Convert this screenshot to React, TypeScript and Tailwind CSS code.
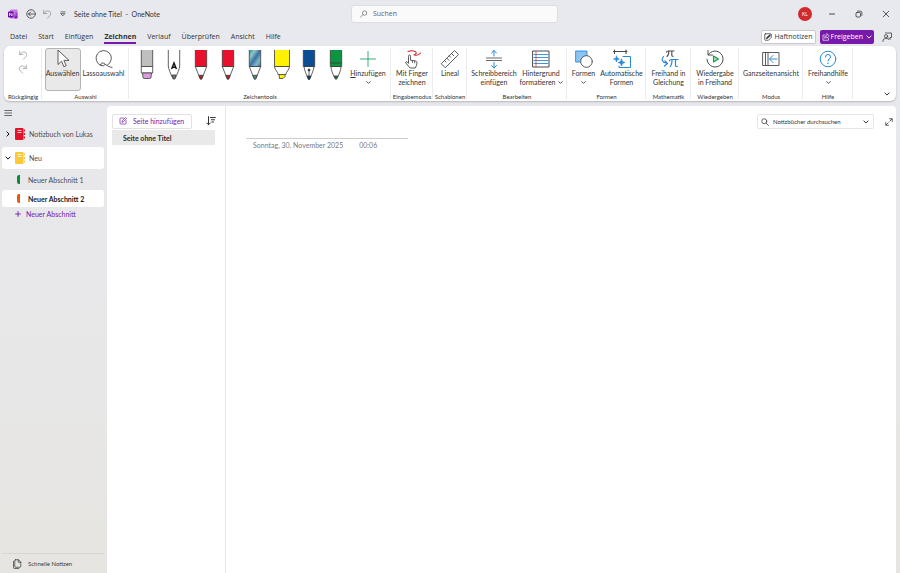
import type { ReactNode } from "react";

type IconProps = { className?: string; box?: string; children: ReactNode };

function Icon({ className = "size-5", box = "0 0 20 20", children }: IconProps) {
  return (
    <svg
      viewBox={box}
      className={className}
      fill="none"
      stroke="currentColor"
      strokeLinecap="round"
      strokeLinejoin="round"
      aria-hidden="true"
    >
      {children}
    </svg>
  );
}

function Chevron({ className = "size-1.5" }: { className?: string }) {
  return (
    <Icon className={className} box="0 0 8 8">
      <path d="M1.2 2.6 4 5.4l2.8-2.8" strokeWidth="1.3" />
    </Icon>
  );
}

function Undo({ className }: { className: string }) {
  return (
    <Icon className={className} box="0 0 12 12">
      <path d="M2 1.500v4h4M2.200 5.300C4 2.600 6.400 1.700 8.400 2.600c2.300 1.100 2.700 3.700 1 5.400L6.500 11" strokeWidth="0.9" />
    </Icon>
  );
}

function Group({ label, width, children }: { label: string; width: string; children: ReactNode }) {
  return (
    <section className={`relative flex shrink-0 flex-col items-center ${width}`}>
      <div className="flex h-11 w-full justify-center pt-0.5">{children}</div>
      <h2 className="mt-0.5 whitespace-nowrap text-[6px] leading-[9px]">{label}</h2>
      <span className="absolute inset-y-0.5 right-0 w-px bg-[#ececee]" />
    </section>
  );
}

type ToolProps = {
  lines: ReactNode[];
  width: string;
  icon: ReactNode;
  active?: boolean;
  menu?: boolean;
};

function Tool({ lines, width, icon, active = false, menu = false }: ToolProps) {
  return (
    <button
      type="button"
      className={`flex h-[43px] shrink-0 flex-col items-center rounded-[3px] border ${width} ${
        active ? "border-[#b4b4b4] bg-[#e9e9e9]" : "border-transparent"
      }`}
    >
      <span className="flex h-5 items-center text-[#4a4a4a]">{icon}</span>
      {lines.map((line, i) => (
        <span key={i} className="whitespace-nowrap text-[7px] leading-[9px]">
          {line}
        </span>
      ))}
      {menu && <Chevron className="mt-0.5 size-[5px]" />}
    </button>
  );
}

function Pen({ name, children }: { name: string; children: ReactNode }) {
  return (
    <button type="button" aria-label={name} className="flex w-[27px] shrink-0 justify-center pt-0.5">
      <svg viewBox="0 0 18 30" className="h-[30px] w-[18px]" fill="none" stroke="#3b3b3b" strokeWidth="0.8" aria-hidden="true">
        {children}
      </svg>
    </button>
  );
}

function RedPencil() {
  return (
    <Pen name="Stift: Rot">
      <path d="M3.300 16.500 8 28.500h2l4.700-12z" fill="#fff" />
      <path d="m6.900 25.300 1.300 3.400.8 1 .8-1 1.300-3.400z" fill="#c4161c" />
      <path d="M3.300 0v16.500h11.400V0" fill="#e8112d" />
    </Pen>
  );
}

function Pens() {
  return (
    <>
      <Pen name="Radierer">
        <path d="M3.300 0v16.500h11.400V0" fill="#bfbfbf" />
        <path d="M3.300 16.500h11.400v6.500H3.300z" fill="#fff" />
        <path d="M4.500 23h9l-.5 4.500q-.2 1-1.200 1H6.200q-1 0-1.200-1z" fill="#d99fdc" />
      </Pen>
      <Pen name="Freihand in Text">
        <path d="M3.300 0v16q.2 2.500 1.500 5.500l3 7h2.400l3-7q1.300-3 1.500-5.500V0" fill="#fff" />
        <path d="m7 25 1.200 3.500.8 1 .8-1L11 25z" fill="#777" />
        <path d="M6.600 19 9 13l2.400 6M7.500 17.200h3" stroke="#111" strokeWidth="1.400" />
      </Pen>
      <RedPencil />
      <RedPencil />
      <Pen name="Stift: Galaxie">
        <defs>
          <linearGradient id="galaxy" x1="0" y1="0" x2="1" y2="1">
            <stop offset="0" stopColor="#2c8c9c" />
            <stop offset=".25" stopColor="#8dc8c0" />
            <stop offset=".5" stopColor="#3d6fa5" />
            <stop offset=".75" stopColor="#79c0c4" />
            <stop offset="1" stopColor="#5a5b9e" />
          </linearGradient>
        </defs>
        <path d="M3.300 16.500 8 28.500h2l4.700-12z" fill="#fff" />
        <path d="m6.900 25.300 1.300 3.400.8 1 .8-1 1.300-3.400z" fill="#4c8c8c" />
        <path d="M3.300 0v16.500h11.400V0" fill="url(#galaxy)" />
      </Pen>
      <Pen name="Textmarker: Gelb">
        <path d="M6.300 24v4.500h3.700l2-2V24z" fill="#fff200" />
        <path d="M1.500 16.500q.2 2.500 2 4.500 1.300 1.500 1.500 3.500h8q.2-2 1.500-3.500 1.800-2 2-4.500z" fill="#fff" />
        <path d="M1.500 0v16.500h15V0" fill="#fff200" />
      </Pen>
      <Pen name="Füllfederhalter: Blau">
        <path d="M4 16.500q.2 3 2 7l2.200 5.500h1.600l2.200-5.500q1.800-4 2-7z" fill="#fff" />
        <path d="m7 26 1.300 3 .7 1 .7-1L11 26z" fill="#0b3f7d" />
        <path d="M9 20v6" />
        <circle cx="9" cy="20" r="1" fill="#222" />
        <path d="M3.300 0v16.500h11.400V0" fill="#0a4f93" />
      </Pen>
      <Pen name="Stift: Grün">
        <path d="M4 16.500q0 3 1.500 6.500L8 28.500h2l2.500-5.500Q14 19.500 14 16.500z" fill="#fff" />
        <path d="m7 26 1.300 2.500.7 1 .7-1L11 26z" fill="#0b7d33" />
        <path d="M3.300 0v16.500h11.400V0" fill="#0d9440" />
        <path d="M3.300 13h11.400" />
      </Pen>
    </>
  );
}

const tabs = ["Datei", "Start", "Einfügen", "Zeichnen", "Verlauf", "Überprüfen", "Ansicht", "Hilfe"];

function TitleBar() {
  return (
    <header className="flex h-7 items-center">
      <div className="flex min-w-0 flex-1 items-center pl-2">
        <svg viewBox="0 0 20 20" className="size-2.5 shrink-0" role="img" aria-label="OneNote">
          <rect x="4" y="1" width="15" height="18" rx="2" fill="#c778e8" />
          <path d="M15 7h4v6h-4z" fill="#a03fd0" />
          <path d="M13 13h6v4q0 2-2 2h-4z" fill="#7f24b5" />
          <rect x="0" y="5" width="11" height="12" rx="1.500" fill="#6a0fa5" />
          <path d="M3 14V8l5 6V8" stroke="#fff" strokeWidth="1.500" fill="none" />
        </svg>
        <button type="button" aria-label="Zurück" className="ml-2">
          <Icon className="size-2.5">
            <circle cx="10" cy="10" r="8.500" strokeWidth="1.600" />
            <path d="M15 10H5m4-4-4 4 4 4" strokeWidth="1.600" />
          </Icon>
        </button>
        <button type="button" aria-label="Rückgängig" className="ml-1.5 text-[#8b8c90]">
          <Undo className="size-2.5" />
        </button>
        <button type="button" aria-label="Symbolleiste anpassen" className="ml-2">
          <Icon className="size-1.5" box="0 0 8 8">
            <path d="M1.200 1.200h5.600M1.500 3.500h5L4 6.200z" strokeWidth=".9" />
          </Icon>
        </button>
        <h1 className="ml-2 truncate text-[7px] leading-[10px]">Seite ohne Titel&nbsp; -&nbsp; OneNote</h1>
      </div>
      <label className="ml-2.5 flex h-[18px] w-[23%] items-center rounded-[3px] border border-[#dcdde0] bg-[#fafafb] pl-2 text-[#5f6064]">
        <Icon className="size-2" box="0 0 16 16">
          <circle cx="10" cy="6" r="4.800" strokeWidth="1.400" />
          <path d="m6.500 9.500-5.500 5" strokeWidth="1.400" />
        </Icon>
        <input
          type="search"
          aria-label="Suchen"
          placeholder="Suchen"
          className="ml-1.5 w-full min-w-0 bg-transparent font-['Open_Sans','Noto_Sans',sans-serif] text-[7px] leading-[10px] outline-none placeholder:text-[#5f6064]"
        />
      </label>
      <div className="flex flex-1 items-center justify-end pr-2.5">
        <button type="button" aria-label="Konto" className="size-3.5 rounded-full bg-[#d02a2e] text-[5px] leading-[14px] text-white">
          KL
        </button>
        <button type="button" aria-label="Minimieren" className="ml-4">
          <Icon className="size-2" box="0 0 8 8"><path d="M1.500 4h5" strokeWidth=".9" /></Icon>
        </button>
        <button type="button" aria-label="Verkleinern" className="ml-[19px]">
          <Icon className="size-2" box="0 0 8 8">
            <rect x="1" y="2.500" width="4.500" height="4.500" rx="1" strokeWidth=".8" />
            <path d="M2.600 1.100h2.500q1.800 0 1.800 1.800v2.500" strokeWidth=".8" />
          </Icon>
        </button>
        <button type="button" aria-label="Schließen" className="ml-[19px]">
          <Icon className="size-2" box="0 0 8 8"><path d="m1.200 1.200 5.600 5.600m0-5.600L1.200 6.800" strokeWidth=".8" /></Icon>
        </button>
      </div>
    </header>
  );
}

function TabRow() {
  return (
    <div className="flex h-[18px] items-center pr-2 pl-2.5 font-['Open_Sans','Noto_Sans',sans-serif]">
      <nav className="flex flex-1 gap-[11px] pt-px text-[7px] leading-[11px]">
        {tabs.map((tab) => (
          <button
            key={tab}
            type="button"
            className={tab === "Zeichnen" ? "border-b-2 border-[#7719aa] font-bold" : "border-b-2 border-transparent"}
          >
            {tab}
          </button>
        ))}
      </nav>
      <button type="button" className="flex h-3.5 items-center gap-0.5 rounded-[2px] border border-[#c9cacd] bg-white px-0.5 text-[7px]">
        <Icon className="size-2" box="0 0 16 16">
          <path d="M3 1.500h10q1.500 0 1.500 1.500v6L9 14.500H3q-1.500 0-1.500-1.500V3Q1.500 1.500 3 1.500z" strokeWidth="1.500" />
          <path d="m12 3-6 5-2 4 4-1.500 5-5z" fill="currentColor" strokeWidth=".8" />
        </Icon>
        Haftnotizen
      </button>
      <button type="button" className="ml-1 flex h-3.5 items-center gap-px rounded-[2px] bg-[#7719aa] px-0.5 text-[7px] text-white">
        <Icon className="size-2" box="0 0 16 16">
          <path d="M6 4H2v10.500h11V11M10 1.500 14.500 6 10 10.500V8Q6.500 8 5 10.500 5.500 5 10 4z" strokeWidth="1.300" />
        </Icon>
        Freigeben
        <Chevron className="ml-0.5 size-1.5" />
      </button>
      <button type="button" aria-label="Feedback" className="ml-2">
        <Icon className="size-2.5">
          <path d="M7 2h12v9h-3v4l-3.500-3.500" strokeWidth="1.500" />
          <circle cx="8" cy="8.500" r="3.200" strokeWidth="1.500" />
          <path d="M1.500 19q0-6.500 6.500-6.500 4 0 5 2.500" strokeWidth="1.500" />
        </Icon>
      </button>
    </div>
  );
}

function Ribbon() {
  return (
    <div className="mx-1 flex h-[55px] shrink-0 rounded-md bg-white shadow-[0_1px_2px_rgba(0,0,0,0.22)]">
      <Group label="Rückgängig" width="w-[38px]">
        <div className="flex flex-col items-center gap-1 pt-0.5 text-[#99999c]">
          <button type="button" aria-label="Rückgängig machen"><Undo className="size-2.5" /></button>
          <button type="button" aria-label="Wiederholen"><Undo className="size-2.5 -scale-x-100" /></button>
        </div>
      </Group>
      <Group label="Auswahl" width="w-[87px]">
        <Tool
          active
          width="w-9"
          lines={["Auswählen"]}
          icon={
            <Icon className="size-5">
              <path d="M5 1.500v14l3.600-3.300 2.200 5.500 2.400-1-2.300-5.300h4.700z" fill="#fff" strokeWidth=".9" />
            </Icon>
          }
        />
        <Tool
          width="w-[46px]"
          lines={["Lassoauswahl"]}
          icon={
            <Icon className="size-5">
              <path d="M7 16.500a7.700 7.700 0 1 1 6.500-.5M7 16.500q-1-2 .8-2.500 2.200-.3 3.700 1.500 3 2.500 6.500 3M7 16.500q2 1.500 4.500-1" strokeWidth=".9" />
            </Icon>
          }
        />
      </Group>
      <Group label="Zeichentools" width="w-[262px]">
        <div className="flex">
          <Pens />
        </div>
        <Tool
          menu
          width="w-[38px]"
          lines={[<><u className="underline-offset-1">H</u>inzufügen</>]}
          icon={<Icon className="size-5 text-[#21a366]"><path d="M10 2.500v15M2.500 10h15" strokeWidth=".9" /></Icon>}
        />
      </Group>
      <Group label="Eingabemodus" width="w-[42px]">
        <Tool
          width="w-10"
          lines={["Mit Finger", "zeichnen"]}
          icon={
            <Icon className="size-5">
              <path d="M6 2.500q4-1.500 7 0t-1 3.300q4 1.500 6.500-1.800" stroke="#d8262c" strokeWidth="1.100" />
              <path d="M6.500 14V7.200q0-1.200 1-1.200t1 1.200v4l5 .8q1.600.3 1.500 1.700l-.5 2.800-1.200 2.500H8L3.800 14q-.6-1 .4-1.400z" strokeWidth=".9" />
              <path d="M10.500 11.500v2M12.700 12v2" strokeWidth=".8" />
            </Icon>
          }
        />
      </Group>
      <Group label="Schablonen" width="w-[34px]">
        <Tool
          width="w-8"
          lines={["Lineal"]}
          icon={
            <Icon className="size-5">
              <path d="M1.500 14.500 14.500 1.500l4 4-13 13zM4.500 11.500l1.500 1.500M6.800 9.200l2.200 2.200M9.200 6.800l1.500 1.500M11.500 4.500l2.200 2.200" strokeWidth=".9" />
            </Icon>
          }
        />
      </Group>
      <Group label="Bearbeiten" width="w-[100px]">
        <Tool
          width="w-12"
          lines={["Schreibbereich", "einfügen"]}
          icon={
            <Icon className="size-5">
              <path d="M2.500 9h15M2.500 11.500h15" strokeWidth=".9" stroke="#555" />
              <path d="M10 7V1.500M7.500 4 10 1.500 12.500 4M10 13.500V19m-2.500-2.500L10 19l2.500-2.500" stroke="#2b88d8" strokeWidth="1" />
            </Icon>
          }
        />
        <Tool
          width="w-[46px]"
          lines={[
            "Hintergrund",
            <span className="flex items-center gap-0.5">formatieren <Chevron className="size-[5px]" /></span>,
          ]}
          icon={
            <Icon className="size-5">
              <path d="M2 2h16v16H2z" strokeWidth="1" />
              <path d="M3 5.500h14M3 8.500h14M3 11.500h14M3 14.500h14" stroke="#2b88d8" strokeWidth=".9" />
              <path d="M5 2.500v15" stroke="#d8262c" strokeWidth=".7" />
            </Icon>
          }
        />
      </Group>
      <Group label="Formen" width="w-[79px]">
        <Tool
          menu
          width="w-[30px]"
          lines={["Formen"]}
          icon={
            <Icon className="size-5">
              <path d="M2 2h11v11H2z" fill="#8cc5f3" stroke="#2b88d8" strokeWidth=".9" />
              <circle cx="12.500" cy="12.500" r="5.800" fill="#fff" strokeWidth=".9" />
            </Icon>
          }
        />
        <Tool
          width="w-[46px]"
          lines={["Automatische", "Formen"]}
          icon={
            <Icon className="size-5">
              <path d="M2.500 1v3.500M14 1v3.500M1.500 2.500h13.500" strokeWidth="1.100" />
              <path d="M11 7.500h7.500V18.500H7V17" stroke="#2b88d8" strokeWidth="1" />
              <path d="m4.500 7 .8 2.200 2.200.8-2.200.8-.8 2.200-.8-2.200L1.500 10l2.200-.8zM9.500 10l1 2.500 2.500 1-2.500 1-1 2.500-1-2.500-2.500-1 2.500-1z" fill="#2b88d8" stroke="#2b88d8" strokeWidth=".6" />
            </Icon>
          }
        />
      </Group>
      <Group label="Mathematik" width="w-[45px]">
        <Tool
          width="w-[43px]"
          lines={["Freihand in", "Gleichung"]}
          icon={
            <Icon className="size-5">
              <path d="M7.500 3.200q.4-1.200 1.700-1.200H15M9.800 2.200q0 4-1.800 5.300M12.800 2.200v4q0 1.300 1.400 1" strokeWidth="1.100" />
              <path d="M4.500 7.500q-4 5 3.500 7M6 11.800l2.500 2.700L5.500 17M10.500 11.800q.4-1.300 1.800-1.300H19M13 10.700q0 5-1.800 7M16.500 10.700v5.500q0 1.600 1.800 1.200" stroke="#2b88d8" strokeWidth="1.200" />
            </Icon>
          }
        />
      </Group>
      <Group label="Wiedergeben" width="w-12">
        <Tool
          width="w-11"
          lines={["Wiedergabe", "in Freihand"]}
          icon={
            <Icon className="size-5">
              <path d="M3 1.500V6h4.500M3.200 5.800a8 8 0 1 1-1.200 4.500" strokeWidth="1" />
              <path d="M8.500 7v6l5-3z" fill="#a7dfb9" stroke="#1c9a4b" strokeWidth="1.100" />
            </Icon>
          }
        />
      </Group>
      <Group label="Modus" width="w-16">
        <Tool
          width="w-[62px]"
          lines={["Ganzseitenansicht"]}
          icon={
            <Icon className="size-5">
              <path d="M2 3.500h16v13H2zM4.500 3.500v13M7 3.500v13" strokeWidth=".9" />
              <path d="M16 10H9m3-3.500L8.500 10l3.500 3.500" stroke="#2b88d8" strokeWidth="1" />
            </Icon>
          }
        />
      </Group>
      <Group label="Hilfe" width="w-[50px]">
        <Tool
          menu
          width="w-12"
          lines={["Freihandhilfe"]}
          icon={
            <Icon className="size-5 text-[#2b88d8]">
              <circle cx="10" cy="10" r="7.800" strokeWidth="1" />
              <path d="M7.500 8q0-2.600 2.500-2.600T12.500 8q0 1.200-1.300 2Q10 10.800 10 12" strokeWidth="1" />
              <path d="M10 14.200v.2" strokeWidth="1.300" />
            </Icon>
          }
        />
      </Group>
      <div className="flex flex-1 items-end justify-end pr-1.5 pb-1">
        <button type="button" aria-label="Menüband minimieren"><Chevron className="size-1.5" /></button>
      </div>
    </div>
  );
}

function Notebook({ color }: { color: string }) {
  return (
    <svg viewBox="0 0 20 24" className="h-3 w-2.5 shrink-0" fill={color} aria-hidden="true">
      <rect x="0" y="0" width="17" height="24" rx="2" />
      <path d="M17.500 3H20v4h-2.500zM17.500 10H20v4h-2.500zM17.500 17H20v4h-2.500z" />
      <path d="M5 5h8M5 9h8" stroke="#fff" strokeWidth="1.600" />
    </svg>
  );
}

function Sidebar() {
  return (
    <aside className="flex w-[107px] shrink-0 flex-col pl-0.5 text-[#4c4d51]">
      <button type="button" aria-label="Navigation" className="flex h-3.5 items-center pl-0.5 text-[#44454a]">
        <Icon className="size-2" box="0 0 8 8"><path d="M.8 1.500h6.800M.8 4h6.800M.8 6.500h6.800" strokeWidth=".8" /></Icon>
      </button>
      <div className="mt-[3px] mr-[3px] flex flex-col gap-0.5 text-[7px] leading-[10px]">
        <button type="button" className="flex h-[22px] items-center pl-[3px] whitespace-nowrap">
          <Chevron className="size-1.5 -rotate-90 text-black" />
          <span className="ml-1 flex"><Notebook color="#e0132b" /></span>
          <span className="ml-1">Notizbuch von Lukas</span>
        </button>
        <button type="button" className="flex h-[22px] items-center rounded-[3px] bg-white pl-[3px]">
          <Chevron className="size-1.5 text-black" />
          <span className="ml-1 flex"><Notebook color="#fcc83a" /></span>
          <span className="ml-1">Neu</span>
        </button>
        <button type="button" className="flex h-[17px] items-center pl-[15px]">
          <span className="h-[9px] w-[3px] rounded-l-[2px] bg-[#10893e]" />
          <span className="ml-2">Neuer Abschnitt 1</span>
        </button>
        <button type="button" className="flex h-[17px] items-center rounded-[3px] bg-white pl-[15px] font-bold text-[#1b1b1b]">
          <span className="h-[9px] w-[3px] rounded-l-[2px] bg-[#e8590c]" />
          <span className="ml-2">Neuer Abschnitt 2</span>
        </button>
      </div>
      <button type="button" className="flex h-[13px] items-center pl-[13px] text-[7px] leading-[10px] text-[#7719aa]">
        <Icon className="size-1.5" box="0 0 8 8"><path d="M4 .8v6.400M.8 4h6.400" strokeWidth="1.200" /></Icon>
        <span className="ml-[5px]">Neuer Abschnitt</span>
      </button>
      <button type="button" className="mt-auto mr-[3px] flex h-5 items-center border-t border-[#d6d6d4] pl-2.5 text-[6px] text-[#3d3d3d]">
        <Icon className="size-2.5">
          <path d="M7 1.500h6l4.500 4.500v9q0 1.500-1.500 1.500H7q-1.500 0-1.500-1.500V3Q5.500 1.500 7 1.500zM12.500 1.500v5h5M3 4.500V17q0 2 2 2h8.500" strokeWidth="1.500" />
        </Icon>
        <span className="ml-1.5">Schnelle Notizen</span>
      </button>
    </aside>
  );
}

function PageList() {
  return (
    <div className="w-[119px] shrink-0 border-r border-[#e6e6e6] pt-1.5 pr-2.5 pl-[5px]">
      <div className="flex items-center justify-between">
        <button type="button" className="flex h-[15px] w-20 items-center rounded-[2px] border border-[#e2e2e4] pl-1.5 text-[7px] whitespace-nowrap text-[#7719aa]">
          <Icon className="size-2" box="0 0 16 16">
            <path d="M9 2H3.500Q2 2 2 3.500v9Q2 14 3.500 14h9q1.500 0 1.500-1.500V7M6 10l.7-2.700L13 1l2 2-6.300 6.300z" strokeWidth="1.400" />
          </Icon>
          <span className="ml-1.5">Seite hinzufügen</span>
        </button>
        <button type="button" aria-label="Seiten sortieren" className="-mr-[5px]">
          <Icon className="size-[18px] p-1" box="0 0 16 16">
            <path d="M4 1v13M1 11l3 3 3-3M7 2.500h8M8.500 6h5M9.500 9.500h2.500" strokeWidth="1.600" />
          </Icon>
        </button>
      </div>
      <button type="button" className="flex h-[15px] w-full items-center bg-[#e9e9e9] pl-[11px] text-[7px] leading-[10px] font-bold text-[#2b2b2b]">
        Seite ohne Titel
      </button>
    </div>
  );
}

function Canvas() {
  return (
    <main className="flex min-w-0 flex-1 items-start justify-between">
      <div className="ml-5 w-[162px] pt-4">
        <input
          type="text"
          aria-label="Seitentitel"
          className="block h-[17px] w-full border-b border-[#cdcdcd] bg-transparent px-[7px] text-[10px] outline-none"
        />
        <p className="flex gap-4 pt-px pl-[7px] text-[7px] leading-[10px] text-[#7a7a7a]">
          <time>Sonntag, 30. November 2025</time>
          <time>00:06</time>
        </p>
      </div>
      <div className="flex items-center pt-2 pr-[3px]">
        <label className="flex h-[15px] w-[117px] items-center rounded-[2px] border border-[#e6e6e8] pr-1 pl-[3px]">
          <Icon className="size-2 shrink-0" box="0 0 16 16">
            <circle cx="6.500" cy="6.500" r="5" strokeWidth="1.500" />
            <path d="m10.500 10.500 4.500 4.500" strokeWidth="1.500" />
          </Icon>
          <input
            type="search"
            aria-label="Notizbücher durchsuchen"
            placeholder="Notizbücher durchsuchen"
            className="ml-1 w-full min-w-0 bg-transparent text-[6px] leading-[9px] outline-none placeholder:text-[#333]"
          />
          <Chevron className="size-1.5 shrink-0" />
        </label>
        <button type="button" aria-label="Vollbild" className="ml-[11px]">
          <Icon className="size-2" box="0 0 16 16">
            <path d="M9 1.500h5.500V7M14 2 9.500 6.500M7 14.500H1.500V9M2 14l4.500-4.500" strokeWidth="1.500" />
          </Icon>
        </button>
      </div>
    </main>
  );
}

export default function App() {
  return (
    <div className="flex h-screen flex-col overflow-hidden bg-linear-to-b from-[#e8e9ee] via-[#e8e8ea] to-[#e6e5e1] font-['Lato','Open_Sans',sans-serif] text-[#333]">
      <TitleBar />
      <TabRow />
      <Ribbon />
      <div className="mt-[5px] flex min-h-0 flex-1">
        <Sidebar />
        <div className="mr-1 flex min-w-0 flex-1 rounded-t-[4px] bg-white">
          <PageList />
          <Canvas />
        </div>
      </div>
    </div>
  );
}
